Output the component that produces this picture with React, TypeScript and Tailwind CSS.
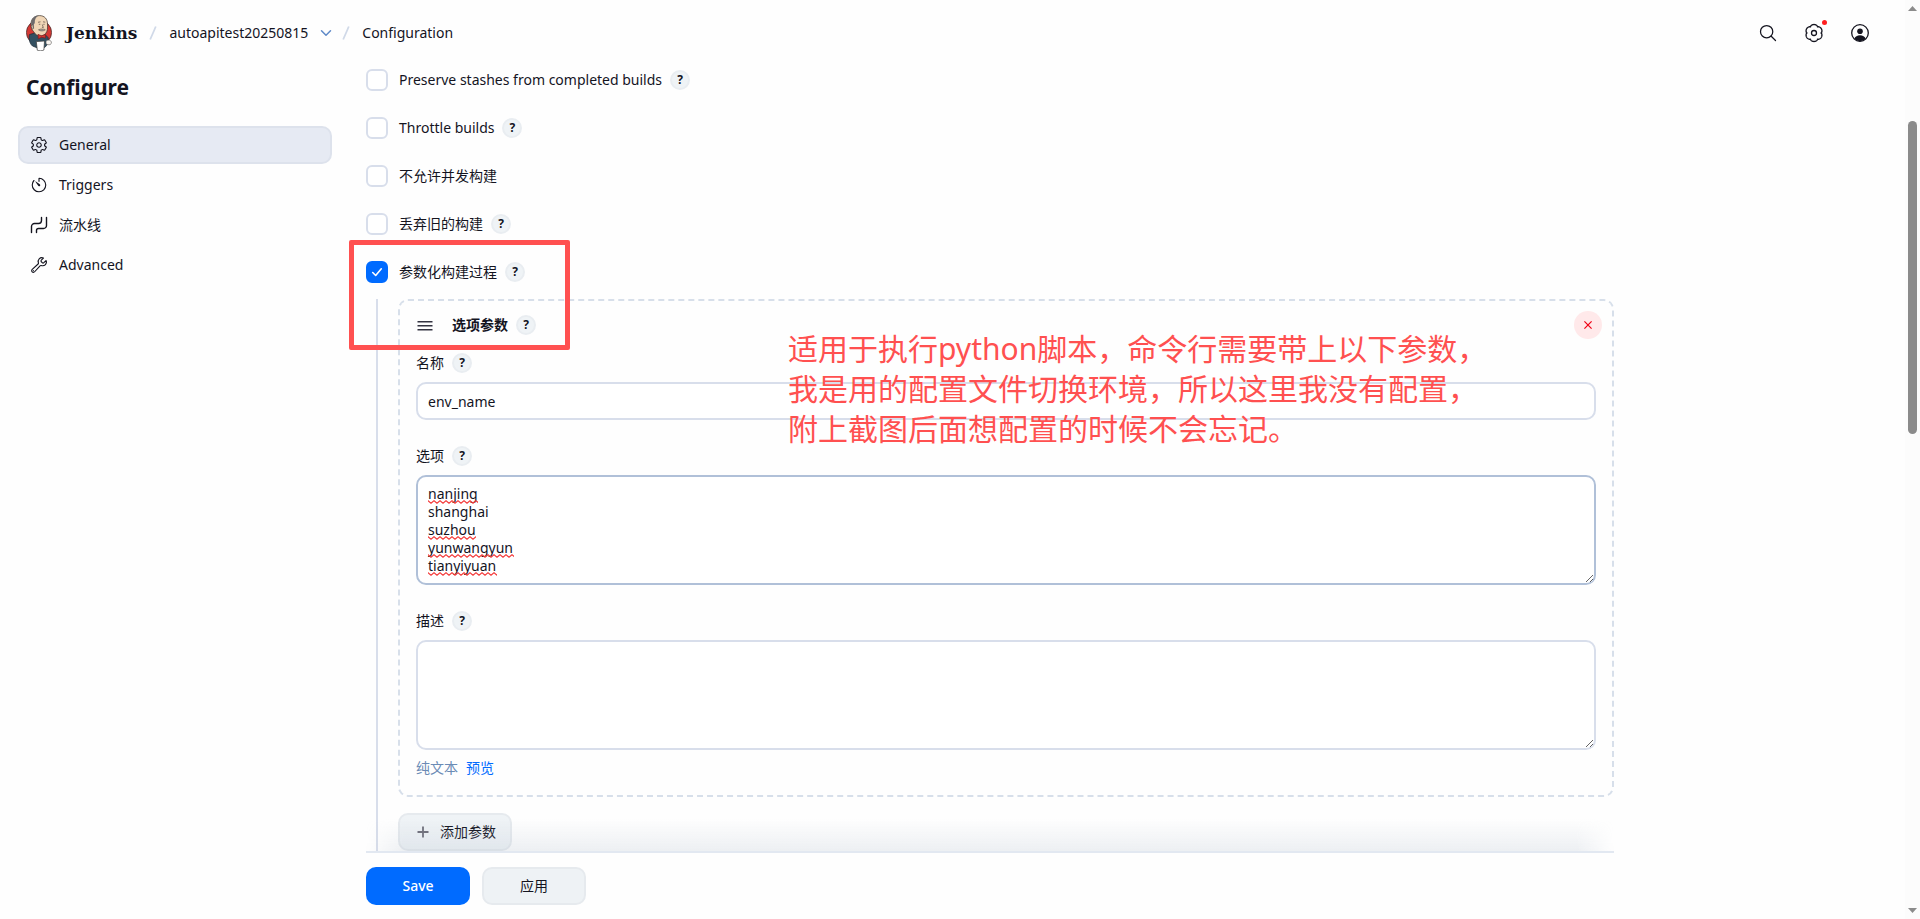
import { useState, type ReactNode } from "react";
import {
  IoBuildOutline,
  IoSearchOutline,
  IoSettingsOutline,
  IoTimerOutline,
} from "react-icons/io5";

function JenkinsLogo() {
  return (
    <svg viewBox="0 0 26 36" className="h-9 w-[26px] shrink-0" aria-hidden="true">
      <ellipse cx="13" cy="17.5" rx="12.6" ry="12.2" fill="#d33833" stroke="#3a2a2a" strokeWidth="0.7" />
      <path d="M3.500 19.500c-.8 3-.5 8.500 3 11.500l5 2 7-.5c3-2 4.500-6 3.500-10l-4-4-9-.500z" fill="#335061" stroke="#1d2b36" strokeWidth="0.7" />
      <path d="M5 9C5 3.500 9 .6 13.500.6 18.500.6 21.500 4 21.500 9c0 3 .3 5-.7 7.500-1 2.700-3.500 4.500-6.300 4.500-3.500 0-5.500-2-7-4.500C5.500 14.500 5 12 5 9z" fill="#f0d6b7" stroke="#3a2f2a" strokeWidth="0.7" />
      <path d="M5.200 9.500C4.800 4 8 .8 12.500.6 9.500 2.500 8.600 5 8.800 8l-1 1.500.3 4-1.300.5z" fill="#6d6b6d" />
      <path d="M6.500 10c-1.600-.4-2 3.200.3 4" fill="#f0d6b7" stroke="#3a2f2a" strokeWidth="0.6" />
      <path d="M12 7.300l2.500-.5M17 6.800l2.300.4M12.800 9.300h1.500M17.300 9.300h1.300M16.300 9.500l1 3-1.400.3" fill="none" stroke="#3a2f2a" strokeWidth="0.6" />
      <path d="M12.500 14.800c2-.9 3-.9 3.800-.4 1-.5 2-.2 3 .4-1.600 1.500-5 1.500-6.800 0z" fill="#b5b0a8" stroke="#3a2f2a" strokeWidth="0.5" />
      <path d="M12 19.300l3.500 1.500 3.700-1.300.4 3.600-4-.8-3.300 1.400z" fill="#d33833" stroke="#7a1815" strokeWidth="0.6" />
      <path d="M10.300 26.600l8.200-.6-.6 9c-2 1-4.700 1.100-6.600.2z" fill="#fff" stroke="#3a3a3a" strokeWidth="0.7" />
      <path d="M20 26.300c1-1.300 3-1.600 4.500-.6 1.300 1.200 1.200 3-.2 3.800-1.500.6-3.500.2-4.300-1z" fill="#f7f3ee" stroke="#555" strokeWidth="0.6" />
    </svg>
  );
}

// Six wide lobes with narrow notches between them, one lobe pointing straight up
const cogPath =
  "M" +
  Array.from({ length: 120 }, (_, i) => {
    const a = (i * Math.PI) / 60;
    const lobe = Math.abs(Math.cos(3 * (a - Math.PI / 2)));
    const r = 7 + 1.5 * Math.pow(lobe, 0.6);
    return `${(10 + r * Math.cos(a)).toFixed(2)} ${(10 + r * Math.sin(a)).toFixed(2)}`;
  }).join("L") +
  "Z";

function CogIcon() {
  return (
    <svg viewBox="0 0 20 20" className="size-5" fill="none" stroke="currentColor" strokeWidth="1.3" strokeLinejoin="round" aria-hidden="true">
      <path d={cogPath} />
      <circle cx="10" cy="10" r="2.5" />
    </svg>
  );
}

function UserIcon() {
  return (
    <svg viewBox="0 0 20 20" className="size-5" aria-hidden="true">
      <circle cx="10" cy="10" r="8.300" fill="none" stroke="currentColor" strokeWidth="1.3" />
      <circle cx="10" cy="8.300" r="2.800" fill="currentColor" />
      <path d="M4.300 15.800c.8-2.300 3-3.500 5.700-3.500s4.900 1.200 5.700 3.500A8.200 8.200 0 0 1 10 18.200a8.200 8.200 0 0 1-5.700-2.400z" fill="currentColor" />
    </svg>
  );
}

function PipelineIcon() {
  return (
    <svg viewBox="0 0 18 18" className="size-[18px]" fill="none" stroke="currentColor" strokeWidth="1.400" strokeLinecap="round" aria-hidden="true">
      <path d="M1.500 16.500v-6a3 3 0 0 1 3-3h4a3 3 0 0 0 3-3V1.500" />
      <path d="M6.500 16.500v-2a2 2 0 0 1 2-2h5a3 3 0 0 0 3-3V1.500" />
    </svg>
  );
}

function Help({ about }: { about: string }) {
  return (
    <button
      type="button"
      aria-label={`Help for feature: ${about}`}
      className="flex size-5 shrink-0 items-center justify-center rounded-full border-2 border-[#e9edf1] bg-[#eff3f6] text-xs font-bold"
    >
      ?
    </button>
  );
}

function Separator() {
  return (
    <svg viewBox="0 0 8 14" className="h-3.5 w-2 shrink-0" aria-hidden="true">
      <path d="M1.200 13.500L6.800.5" stroke="#d0d9e8" strokeWidth="1.800" />
    </svg>
  );
}

function CheckRow({ label, help, defaultChecked }: { label: string; help?: boolean; defaultChecked?: boolean }) {
  const [checked, setChecked] = useState(!!defaultChecked);
  return (
    <div className="flex h-[22px] items-center gap-2">
      <label className="flex items-center gap-[11px]">
        <span className="relative flex size-[22px]">
          <input
            type="checkbox"
            checked={checked}
            onChange={(e) => setChecked(e.target.checked)}
            className="size-[22px] appearance-none rounded-md border-2 border-[#d8deeb] bg-white checked:border-[#006bff] checked:bg-[#006bff]"
          />
          {checked && (
            <svg viewBox="0 0 22 22" className="pointer-events-none absolute inset-0" fill="none" stroke="#fff" strokeWidth="1.600" strokeLinecap="round" strokeLinejoin="round" aria-hidden="true">
              <path d="M6.700 11.500l3 3 5.600-6.700" />
            </svg>
          )}
        </span>
        {label}
      </label>
      {help && <Help about={label} />}
    </div>
  );
}

function Field({ id, label, children }: { id: string; label: string; children: ReactNode }) {
  return (
    <div className="flex flex-col gap-[9px]">
      <div className="flex h-5 items-center gap-2">
        <label htmlFor={id}>{label}</label>
        <Help about={label} />
      </div>
      {children}
    </div>
  );
}

// Spell-check marks under the choices; empty rows are words the dictionary knows
const squiggles = ["w-[50px]", "", "w-12", "w-[86px]", "w-[69px]"];

function Squiggles() {
  return (
    <div className="pointer-events-none absolute top-[11px] left-3" aria-hidden="true">
      {squiggles.map((width, i) => (
        <div key={i} className="flex h-[18px] items-end">
          {width && (
            <svg className={`h-1 ${width}`}>
              <defs>
                <pattern id={`wave-${i}`} width="6" height="4" patternUnits="userSpaceOnUse">
                  <path d="M-1 -.2L0 .8L3 3.200L6 .8L7 -.2" fill="none" stroke="#f43b3b" strokeWidth="1.200" />
                </pattern>
              </defs>
              <rect width="100%" height="4" fill={`url(#wave-${i})`} />
            </svg>
          )}
        </div>
      ))}
    </div>
  );
}

const sections = [
  { name: "General", icon: <IoSettingsOutline className="size-[18px]" />, active: true },
  { name: "Triggers", icon: <IoTimerOutline className="size-[18px]" /> },
  { name: "流水线", icon: <PipelineIcon /> },
  { name: "Advanced", icon: <IoBuildOutline className="size-[18px]" /> },
];

function Header() {
  return (
    <header className="flex h-[66px] items-center justify-between pr-[35px] pl-[26px]">
      <nav aria-label="Breadcrumbs" className="flex items-center gap-3">
        <a href="#" className="flex items-center gap-3.5">
          <JenkinsLogo />
          <span className="font-['DejaVu_Serif',serif] text-[17px] font-bold">Jenkins</span>
        </a>
        <Separator />
        <a href="#">autoapitest20250815</a>
        <div className="flex items-center gap-2.5">
          <button type="button" aria-label="Project menu" className="text-[#5f8ac8]">
            <svg viewBox="0 0 12 12" className="size-3" fill="none" stroke="currentColor" strokeWidth="1.500" strokeLinecap="round" strokeLinejoin="round" aria-hidden="true">
              <path d="M1.500 3.800L6 8.300l4.500-4.500" />
            </svg>
          </button>
          <Separator />
        </div>
        <span>Configuration</span>
      </nav>
      <div className="flex items-center gap-[26px]">
        <button type="button" aria-label="Search">
          <IoSearchOutline className="size-5" />
        </button>
        <button type="button" aria-label="Manage Jenkins" className="relative">
          <CogIcon />
          <span className="absolute -top-[3px] -right-[3px] size-[5px] rounded-full bg-[#ff1f1f]" />
        </button>
        <button type="button" aria-label="User">
          <UserIcon />
        </button>
      </div>
    </header>
  );
}

function Sidebar() {
  return (
    <aside className="w-[314px] shrink-0">
      <h1 className="mt-[5px] px-2 text-[21px] leading-8 font-bold">Configure</h1>
      <nav aria-label="Sections" className="mt-[23px] flex flex-col gap-0.5">
        {sections.map((s) => (
          <a
            key={s.name}
            href="#"
            className={
              s.active
                ? "flex h-[38px] items-center gap-[11px] rounded-[10px] border-2 border-[#dde2ec] bg-[#e6eaf3] px-2.5"
                : "flex h-[38px] items-center gap-[11px] rounded-[10px] border-2 border-transparent px-2.5"
            }
          >
            {s.icon}
            {s.name}
          </a>
        ))}
      </nav>
    </aside>
  );
}

function ChoiceParameter() {
  return (
    <section className="relative rounded-[10px] border-2 border-dashed border-[#d7dfea] pb-[17px]">
      <div className="flex items-center gap-2 pt-2.5 pr-2.5 pl-4">
        <svg viewBox="0 0 18 18" className="size-[18px]" stroke="#333340" strokeWidth="1.500" aria-hidden="true">
          <path d="M1.500 5.700h15M1.500 9.700h15M1.500 13.700h15" />
        </svg>
        <h2 className="ml-2.5 font-bold">选项参数</h2>
        <Help about="选项参数" />
        <button type="button" aria-label="Delete" className="ml-auto flex size-7 items-center justify-center rounded-full bg-[#ffe9ea] text-[#f00014]">
          <svg viewBox="0 0 8 8" className="size-2" stroke="currentColor" strokeWidth="1.200" aria-hidden="true">
            <path d="M.4.4l7.200 7.200M7.600.4L.4 7.600" />
          </svg>
        </button>
      </div>
      <div className="mt-3.5 flex flex-col gap-[26px] px-4">
        <Field id="name" label="名称">
          <input
            id="name"
            defaultValue="env_name"
            className="h-[38px] w-full rounded-[10px] border-2 border-[#d8deeb] bg-white px-2.5 outline-none"
          />
        </Field>
        <Field id="choices" label="选项">
          <div className="relative flex">
            <textarea
              id="choices"
              spellCheck={false}
              defaultValue={"nanjing\nshanghai\nsuzhou\nyunwangyun\ntianyiyuan"}
              className="h-[110px] w-full rounded-[10px] border-2 border-[#b0c0d8] bg-white px-2.5 py-2 leading-[18px] outline-none"
            />
            <Squiggles />
          </div>
        </Field>
        <Field id="description" label="描述">
          <textarea
            id="description"
            className="h-[110px] w-full rounded-[10px] border-2 border-[#d8deeb] bg-white px-2.5 py-2 leading-[18px] outline-none"
          />
        </Field>
      </div>
      <div className="mt-2 flex gap-2 px-4 leading-5">
        <span className="text-[#6b8bb5]">纯文本</span>
        <a href="#" className="text-[#006bff]">预览</a>
      </div>
      <p className="pointer-events-none absolute top-7 left-[388px] text-[30px] leading-10 whitespace-nowrap text-[#ff5050]">
        适用于执行python脚本，命令行需要带上以下参数，
        <br />
        我是用的配置文件切换环境，所以这里我没有配置，
        <br />
        附上截图后面想配置的时候不会忘记。
      </p>
    </section>
  );
}

function Scrollbar() {
  return (
    <div className="sticky top-0 flex h-screen w-[15px] shrink-0 flex-col items-center bg-[#fcfcfc] py-1.5 text-[#8b8b8b]" aria-hidden="true">
      <svg viewBox="0 0 9 5" className="h-[5px] w-[9px]" fill="currentColor">
        <path d="M0 5L4.500 0L9 5z" />
      </svg>
      <div className="mt-[110px] h-[313px] w-[9px] rounded-full bg-[#8b8b8b]" />
      <svg viewBox="0 0 9 5" className="mt-auto h-[5px] w-[9px]" fill="currentColor">
        <path d="M0 0L4.500 5L9 0z" />
      </svg>
    </div>
  );
}

export default function App() {
  return (
    <div className="flex min-h-screen bg-[#fefefe] font-['Noto_Sans','Noto_Sans_CJK_SC',sans-serif] text-sm text-[#14141f]">
      <div className="min-w-0 flex-1">
        <Header />
        <div className="flex gap-[34px] px-[18px]">
          <Sidebar />
          <main className="max-w-[1248px] min-w-0 flex-1">
            <form onSubmit={(e) => e.preventDefault()}>
              <div className="relative z-10 flex flex-col gap-[26px] pt-[3px]">
                <CheckRow label="Preserve stashes from completed builds" help />
                <CheckRow label="Throttle builds" help />
                <CheckRow label="不允许并发构建" />
                <CheckRow label="丢弃旧的构建" help />
                <CheckRow label="参数化构建过程" help defaultChecked />
                <div className="pointer-events-none absolute -left-[17px] top-[174px] h-[110px] w-[221px] rounded-xs border-[5px] border-[#ff5050]" />
              </div>
              <div className="mt-4 ml-2.5 border-l-2 border-[#d8deeb] pl-5">
                <ChoiceParameter />
                <button
                  type="button"
                  className="mt-4 flex h-[38px] items-center gap-2 rounded-[10px] border-2 border-[#e6eaee] bg-[#eff3f6] px-3.5"
                >
                  <svg viewBox="0 0 18 18" className="size-[18px]" stroke="#6d6d78" strokeWidth="1.800" aria-hidden="true">
                    <path d="M9 3.500v11M3.500 9h11" />
                  </svg>
                  添加参数
                </button>
              </div>
              <div className="sticky bottom-0 flex gap-3 border-t-2 border-[#e2e8f1] bg-[#fefefe] py-3.5">
                <div className="pointer-events-none absolute inset-x-0 bottom-full mb-0.5 h-8 bg-linear-to-t from-[#a9b6c6]/20 to-transparent mask-x-from-97%" />
                <button type="submit" className="h-[38px] w-[104px] rounded-[10px] bg-[#006bff] font-medium text-white">
                  Save
                </button>
                <button type="button" className="h-[38px] w-[104px] rounded-[10px] border-2 border-[#e6eaee] bg-[#eef2f5]">
                  应用
                </button>
              </div>
            </form>
          </main>
        </div>
      </div>
      <Scrollbar />
    </div>
  );
}
